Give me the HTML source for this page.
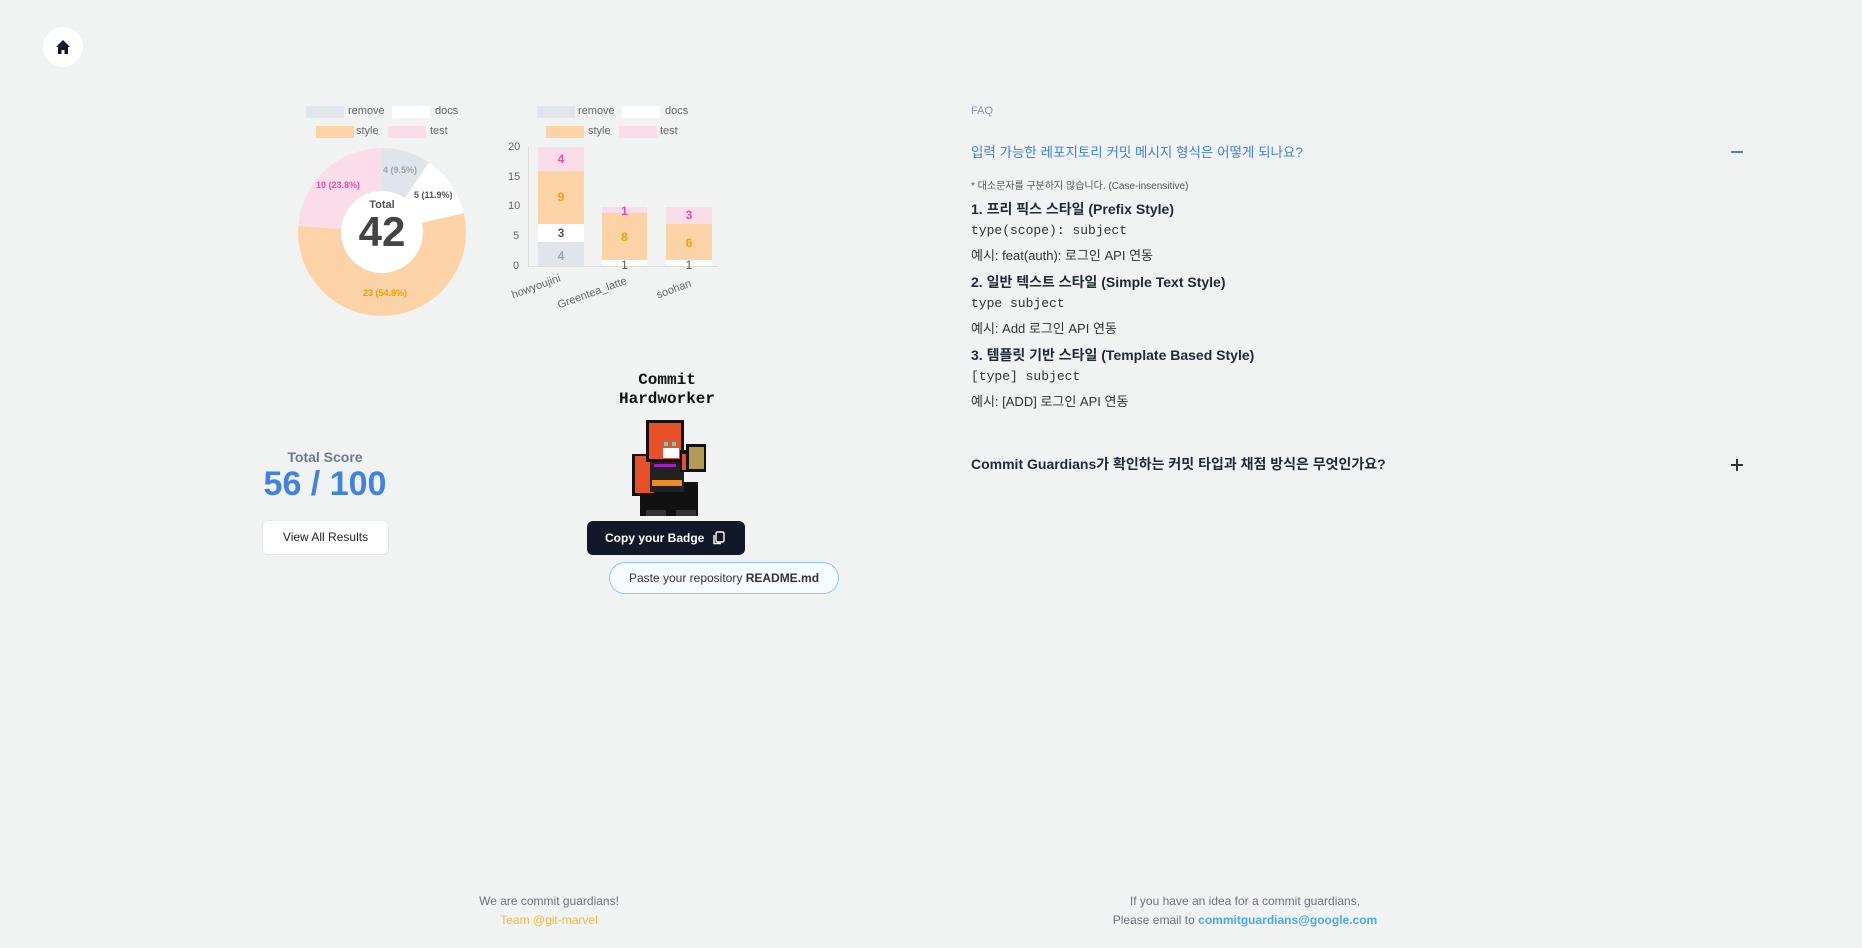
<!DOCTYPE html>
<html><head><meta charset="utf-8"><style>
*{margin:0;padding:0;box-sizing:border-box}
body{width:1862px;height:948px;background:#f1f2f2;font-family:"Liberation Sans","Noto Sans CJK KR",sans-serif;position:relative;overflow:hidden;color:#1f2937}
.a{position:absolute;white-space:nowrap}
.lg{font-size:11px;color:#666}
.box{position:absolute;height:12px}
.mono{font-family:"Liberation Mono","Noto Sans CJK KR",monospace}
</style></head><body>
<div class="a" style="left:43px;top:27px;width:40px;height:40px;border-radius:50%;background:#fff"></div>
<svg class="a" style="left:54px;top:38px" width="18" height="18" viewBox="0 0 18 18"><path d="M9 2 L16 9 L14 9 L14 16 L10.5 16 L10.5 12 L7.5 12 L7.5 16 L4 16 L4 9 L2 9 Z" fill="#111827"/></svg>

<div class="box" style="left:306px;top:106px;width:38px;background:#dfe5ea"></div><div class="a lg" style="left:348px;top:105px">remove</div>
<div class="box" style="left:392px;top:106px;width:38px;background:#fff"></div><div class="a lg" style="left:435px;top:105px">docs</div>
<div class="box" style="left:316px;top:126px;width:38px;background:#fbd3a6"></div><div class="a lg" style="left:356px;top:125px">style</div>
<div class="box" style="left:388px;top:126px;width:38px;background:#fbdde9"></div><div class="a lg" style="left:430px;top:125px">test</div>
<div class="a" style="left:298px;top:148px;width:168px;height:168px;border-radius:50%;background:conic-gradient(#dfe5ea 0deg 34deg,#fff 34deg 77deg,#fbd3a6 77deg 274deg,#fbdde9 274deg 360deg)"></div>
<div class="a" style="left:341px;top:191px;width:82px;height:82px;border-radius:50%;background:#fff"></div>
<div class="a" style="left:341px;top:199px;width:82px;text-align:center;font-size:11px;font-weight:bold;color:#555">Total</div>
<div class="a" style="left:341px;top:208px;width:82px;text-align:center;font-size:42px;font-weight:bold;color:#444">42</div>
<div class="a" style="left:383px;top:165px;font-size:9px;font-weight:bold;color:#9aa3ab">4 (9.5%)</div>
<div class="a" style="left:414px;top:190px;font-size:9px;font-weight:bold;color:#555">5 (11.9%)</div>
<div class="a" style="left:316px;top:180px;font-size:9px;font-weight:bold;color:#e84fa8">10 (23.8%)</div>
<div class="a" style="left:363px;top:288px;font-size:9px;font-weight:bold;color:#f59e0b">23 (54.8%)</div>

<div class="box" style="left:537px;top:106px;width:38px;background:#dfe5ea"></div><div class="a lg" style="left:578px;top:105px">remove</div>
<div class="box" style="left:622px;top:106px;width:38px;background:#fff"></div><div class="a lg" style="left:665px;top:105px">docs</div>
<div class="box" style="left:546px;top:126px;width:38px;background:#fbd3a6"></div><div class="a lg" style="left:588px;top:125px">style</div>
<div class="box" style="left:619px;top:126px;width:38px;background:#fbdde9"></div><div class="a lg" style="left:660px;top:125px">test</div>
<div class="a" style="left:528px;top:147px;width:1px;height:120px;background:#ddd"></div>
<div class="a" style="left:528px;top:266px;width:190px;height:1px;background:#ddd"></div>
<div class="a lg" style="left:508px;top:141px">20</div>
<div class="a lg" style="left:508px;top:171px">15</div>
<div class="a lg" style="left:508px;top:200px">10</div>
<div class="a lg" style="left:513px;top:230px">5</div>
<div class="a lg" style="left:513px;top:260px">0</div>
<div class="a" style="left:538px;top:242px;width:46px;height:24px;background:#dfe5ea"></div>
<div class="a" style="left:538px;top:224px;width:46px;height:18px;background:#fff"></div>
<div class="a" style="left:538px;top:171px;width:46px;height:53px;background:#fbd3a6"></div>
<div class="a" style="left:538px;top:147px;width:46px;height:24px;background:#fbdde9"></div>
<div class="a" style="left:602px;top:260px;width:45px;height:6px;background:#fff"></div>
<div class="a" style="left:602px;top:213px;width:45px;height:47px;background:#fbd3a6"></div>
<div class="a" style="left:602px;top:207px;width:45px;height:6px;background:#fbdde9"></div>
<div class="a" style="left:666px;top:260px;width:46px;height:6px;background:#fff"></div>
<div class="a" style="left:666px;top:224px;width:46px;height:36px;background:#fbd3a6"></div>
<div class="a" style="left:666px;top:207px;width:46px;height:17px;background:#fbdde9"></div>
<div class="a" style="left:538px;top:249px;width:46px;text-align:center;font-size:12px;font-weight:bold;color:#9aa3ab">4</div>
<div class="a" style="left:538px;top:226px;width:46px;text-align:center;font-size:12px;font-weight:bold;color:#555">3</div>
<div class="a" style="left:538px;top:190px;width:46px;text-align:center;font-size:12px;font-weight:bold;color:#f59e0b">9</div>
<div class="a" style="left:538px;top:152px;width:46px;text-align:center;font-size:12px;font-weight:bold;color:#e84fa8">4</div>
<div class="a" style="left:602px;top:258px;width:45px;text-align:center;font-size:12px;color:#555">1</div>
<div class="a" style="left:602px;top:230px;width:45px;text-align:center;font-size:12px;font-weight:bold;color:#f59e0b">8</div>
<div class="a" style="left:602px;top:204px;width:45px;text-align:center;font-size:12px;font-weight:bold;color:#e84fa8">1</div>
<div class="a" style="left:666px;top:258px;width:46px;text-align:center;font-size:12px;color:#555">1</div>
<div class="a" style="left:666px;top:236px;width:46px;text-align:center;font-size:12px;font-weight:bold;color:#f59e0b">6</div>
<div class="a" style="left:666px;top:208px;width:46px;text-align:center;font-size:12px;font-weight:bold;color:#e84fa8">3</div>
<div class="a lg" style="left:510px;top:290px;transform:rotate(-20deg);transform-origin:left top">howyoujini</div>
<div class="a lg" style="left:556px;top:300px;transform:rotate(-20deg);transform-origin:left top">Greentea_latte</div>
<div class="a lg" style="left:655px;top:290px;transform:rotate(-20deg);transform-origin:left top">soohan</div>

<div class="a" style="left:225px;top:449px;width:200px;text-align:center;font-size:14px;font-weight:bold;color:#6b7a90">Total Score</div>
<div class="a" style="left:225px;top:465px;width:200px;text-align:center;font-size:34px;font-weight:bold;color:#3f82e4">56 / 100</div>
<div class="a" style="left:262px;top:520px;width:127px;height:35px;background:#fff;border:1px solid #e5e7eb;border-radius:6px;font-size:12px;line-height:33px;text-align:center;color:#222">View All Results</div>

<div class="a mono" style="left:567px;top:371px;width:200px;text-align:center;font-size:16px;font-weight:bold;line-height:19px;color:#111">Commit<br>Hardworker</div>
<svg class="a" style="left:620px;top:420px" width="100" height="100" viewBox="0 0 100 100">
<rect x="20" y="62" width="58" height="34" fill="#111"/>
<rect x="12" y="34" width="24" height="42" fill="#111"/>
<rect x="15" y="36" width="19" height="37" fill="#e8502a"/>
<rect x="30" y="36" width="34" height="36" fill="#222"/>
<rect x="26" y="0" width="38" height="42" fill="#111"/>
<rect x="29" y="3" width="32" height="36" fill="#e8502a"/>
<rect x="44" y="22" width="4" height="4" fill="#4dd"/><rect x="52" y="22" width="4" height="4" fill="#4dd"/>
<rect x="43" y="28" width="16" height="10" fill="#fff"/>
<rect x="60" y="30" width="10" height="22" fill="#111"/><rect x="62" y="34" width="8" height="16" fill="#e8502a"/>
<rect x="66" y="24" width="20" height="28" fill="#111"/><rect x="69" y="27" width="15" height="22" fill="#b59a55"/>
<rect x="32" y="60" width="30" height="6" fill="#f08a24"/>
<rect x="34" y="44" width="22" height="3" fill="#a020c0"/>
<rect x="26" y="90" width="20" height="6" fill="#333"/><rect x="56" y="90" width="20" height="6" fill="#333"/>
</svg>
<div class="a" style="left:587px;top:521px;width:158px;height:34px;background:#111827;border-radius:6px;color:#fff;font-size:12px;font-weight:bold;line-height:34px;padding-left:18px">Copy your Badge</div>
<svg class="a" style="left:712px;top:531px" width="13" height="14" viewBox="0 0 13 14"><rect x="4" y="1" width="8" height="10" rx="1.5" fill="none" stroke="#fff" stroke-width="1.4"/><path d="M2 4 V12.5 H9" fill="none" stroke="#fff" stroke-width="1.4"/></svg>
<div class="a" style="left:609px;top:562px;width:230px;height:32px;background:#f6fbff;border:1px solid #93c5fd;border-radius:16px;font-size:12px;line-height:30px;text-align:center;color:#333">Paste your repository <b>README.md</b></div>

<div class="a" style="left:971px;top:105px;font-size:11px;color:#8a94a6">FAQ</div>
<div class="a" style="left:971px;top:141px;font-size:13.5px;color:#3f82e4">입력 가능한 레포지토리 커밋 메시지 형식은 어떻게 되나요?</div>
<div class="a" style="left:1731px;top:151px;width:12px;height:2px;background:#3f82e4"></div>
<div class="a" style="left:971px;top:177px;font-size:10px;color:#555">* 대소문자를 구분하지 않습니다. (Case-insensitive)</div>
<div class="a" style="left:971px;top:199px;font-size:14px;font-weight:bold">1. 프리 픽스 스타일 (Prefix Style)</div>
<div class="a mono" style="left:971px;top:223px;font-size:13px;color:#333">type(scope): subject</div>
<div class="a" style="left:971px;top:245px;font-size:13px;color:#333">예시: feat(auth): 로그인 API 연동</div>
<div class="a" style="left:971px;top:272px;font-size:14px;font-weight:bold">2. 일반 텍스트 스타일 (Simple Text Style)</div>
<div class="a mono" style="left:971px;top:296px;font-size:13px;color:#333">type subject</div>
<div class="a" style="left:971px;top:318px;font-size:13px;color:#333">예시: Add 로그인 API 연동</div>
<div class="a" style="left:971px;top:345px;font-size:14px;font-weight:bold">3. 템플릿 기반 스타일 (Template Based Style)</div>
<div class="a mono" style="left:971px;top:369px;font-size:13px;color:#333">[type] subject</div>
<div class="a" style="left:971px;top:391px;font-size:13px;color:#333">예시: [ADD] 로그인 API 연동</div>
<div class="a" style="left:971px;top:454px;font-size:14px;font-weight:bold;color:#1f2937">Commit Guardians가 확인하는 커밋 타입과 채점 방식은 무엇인가요?</div>
<div class="a" style="left:1731px;top:464px;width:12px;height:2px;background:#333"></div>
<div class="a" style="left:1736px;top:459px;width:2px;height:12px;background:#333"></div>

<div class="a" style="left:449px;top:894px;width:200px;text-align:center;font-size:12px;color:#6b7280">We are commit guardians!</div>
<div class="a" style="left:449px;top:913px;width:200px;text-align:center;font-size:12px;color:#f5b942">Team @git-marvel</div>
<div class="a" style="left:1095px;top:894px;width:300px;text-align:center;font-size:12px;color:#6b7280">If you have an idea for a commit guardians,</div>
<div class="a" style="left:1095px;top:913px;width:300px;text-align:center;font-size:12px;color:#6b7280">Please email to <b style="color:#4aa8f0">commitguardians@google.com</b></div>
</body></html>
